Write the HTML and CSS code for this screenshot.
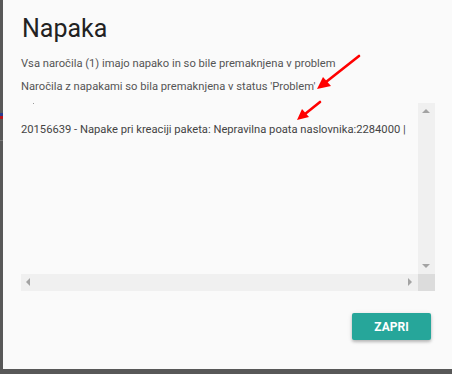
FILE: index.html
```
<!DOCTYPE html>
<html lang="sl">
<head>
    <meta charset="UTF-8">
    <meta name="viewport" content="width=device-width, initial-scale=1.0">
    <title>Napaka</title>
    <link rel="stylesheet" href="styles.css">
</head>
<body>
    <div class="page-edge">
        <div class="edge-blue"></div>
        <div class="edge-red"></div>
        <div class="edge-line"></div>
    </div>

    <div class="modal">
        <h4 class="modal-title">Napaka</h4>
        <p class="modal-text">Vsa naročila (1) imajo napako in so bile premaknjena v problem</p>
        <p class="modal-text">Naročila z napakami so bila premaknjena v status 'Problem'</p>

        <div class="error-box">
            <span class="dot"></span>
            <div class="error-content">
                <div class="error-line">20156639 - Napake pri kreaciji paketa: Nepravilna poata naslovnika:2284000 |</div>
            </div>
            <div class="scroll-v">
                <span class="arrow arrow-up"></span>
                <span class="arrow arrow-down"></span>
            </div>
            <div class="scroll-h">
                <span class="arrow arrow-left"></span>
                <span class="arrow arrow-right"></span>
            </div>
            <div class="scroll-corner"></div>
        </div>

        <div class="modal-footer">
            <a href="#" class="btn-close">ZAPRI</a>
        </div>

        <!-- rdeče puščice z zaslonske slike -->
        <svg class="marks" width="452" height="374" viewBox="0 0 452 374">
            <line x1="359" y1="56" x2="326" y2="82" stroke="#f00" stroke-width="2.6" stroke-linecap="round"/>
            <polygon points="317,89 323,77 331,86" fill="#f00"/>
            <line x1="320" y1="102" x2="305" y2="114" stroke="#f00" stroke-width="2.6" stroke-linecap="round"/>
            <polygon points="297,120 302,109 309,117" fill="#f00"/>
        </svg>
    </div>
</body>
</html>
```
FILE: styles.css
```
body {
    margin: 0;
    height: 374px;
    display: flex;
    align-items: flex-start;
    background-color: #585858;
    font-family: Roboto, "Noto Sans", sans-serif;
    overflow: hidden;
}
.page-edge {
    width: 3px;
    flex-shrink: 0;
    display: flex;
    flex-direction: column;
    padding-top: 113px;
}
.edge-blue {
    height: 3px;
    background-color: #2a3d8f;
}
.edge-red {
    height: 3px;
    background-color: #b5161c;
}
.edge-line {
    height: 1px;
    margin-top: 21px;
    background-color: #777;
}
.modal {
    flex: 1;
    min-width: 0;
    height: 369px;
    box-sizing: border-box;
    background-color: #fafafa;
    padding: 14px 17px 0 18px;
    display: flex;
    flex-direction: column;
}
.modal-title {
    margin: 0 0 0 1px;
    font-size: 25px;
    font-weight: 400;
    line-height: 30px;
    color: #222;
}
.modal-text {
    margin: 0;
    font-size: 11.2px;
    line-height: 23px;
    color: #555;
}
.modal-text:first-of-type {
    margin-top: 8px;
}
.error-box {
    position: relative;
    margin-top: 5px;
    width: 414px;
    height: 188px;
    display: grid;
    grid-template-columns: 397px 17px;
    grid-template-rows: 171px 17px;
}
.dot {
    position: absolute;
    left: 12px;
    top: 0;
    width: 1px;
    height: 1px;
    background-color: #999;
}
.error-content {
    overflow: hidden;
    padding-top: 18px;
}
.error-line {
    white-space: nowrap;
    font-size: 11.2px;
    line-height: 18px;
    color: #444;
}
.scroll-v,
.scroll-h {
    position: relative;
    background-color: #f0f0f0;
}
.scroll-corner {
    background-color: #dcdcdc;
}
.arrow {
    position: absolute;
    width: 0;
    height: 0;
    border: 4px solid transparent;
}
.arrow-up {
    left: 4px;
    top: 6px;
    border-bottom-color: #a3a3a3;
    border-top-width: 0;
}
.arrow-down {
    left: 4px;
    bottom: 6px;
    border-top-color: #a3a3a3;
    border-bottom-width: 0;
}
.arrow-left {
    left: 5px;
    top: 4px;
    border-right-color: #a3a3a3;
    border-left-width: 0;
}
.arrow-right {
    right: 6px;
    top: 4px;
    border-left-color: #a3a3a3;
    border-right-width: 0;
}
.modal-footer {
    display: flex;
    justify-content: flex-end;
    margin-top: 22px;
    padding-right: 4px;
}
.btn-close {
    width: 79px;
    height: 27px;
    display: flex;
    align-items: center;
    justify-content: center;
    background-color: #26a69a;
    color: #fff;
    font-size: 12px;
    font-weight: 700;
    text-decoration: none;
    border-radius: 2px;
    box-shadow: 0 2px 3px rgba(0, 0, 0, 0.2), 0 1px 5px rgba(0, 0, 0, 0.12);
}
.marks {
    position: absolute;
    left: 0;
    top: 0;
    pointer-events: none;
}
```
